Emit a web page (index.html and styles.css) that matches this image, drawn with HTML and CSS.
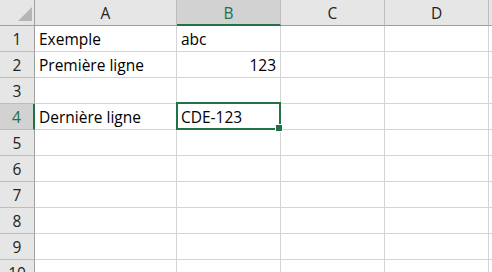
FILE: index.html
```html
<!DOCTYPE html>
<html lang="fr">
<head>
    <meta charset="UTF-8" />
    <title>Feuille</title>
    <link rel="stylesheet" href="styles.css">
</head>
<body>
    <div class="sheet">
        <div class="corner">
            <svg width="34" height="25" viewBox="0 0 34 25"><polygon points="32,7 32,21 18,21" fill="#b5b5b5"/></svg>
        </div>
        <div class="col-head">A</div>
        <div class="col-head active">B</div>
        <div class="col-head">C</div>
        <div class="col-head">D</div>
        <div class="col-head end"></div>

        <div class="row-head">1</div>
        <div class="cell">Exemple</div>
        <div class="cell">abc</div>
        <div class="cell"></div>
        <div class="cell"></div>
        <div class="cell end"></div>

        <div class="row-head">2</div>
        <div class="cell">Première ligne</div>
        <div class="cell num">123</div>
        <div class="cell"></div>
        <div class="cell"></div>
        <div class="cell end"></div>

        <div class="row-head">3</div>
        <div class="cell"></div>
        <div class="cell"></div>
        <div class="cell"></div>
        <div class="cell"></div>
        <div class="cell end"></div>

        <div class="row-head active">4</div>
        <div class="cell">Dernière ligne</div>
        <div class="cell selected">CDE-123<span class="sel-box"><span class="handle"></span></span></div>
        <div class="cell"></div>
        <div class="cell"></div>
        <div class="cell end"></div>

        <div class="row-head">5</div>
        <div class="cell"></div><div class="cell"></div><div class="cell"></div><div class="cell"></div><div class="cell end"></div>
        <div class="row-head">6</div>
        <div class="cell"></div><div class="cell"></div><div class="cell"></div><div class="cell"></div><div class="cell end"></div>
        <div class="row-head">7</div>
        <div class="cell"></div><div class="cell"></div><div class="cell"></div><div class="cell"></div><div class="cell end"></div>
        <div class="row-head">8</div>
        <div class="cell"></div><div class="cell"></div><div class="cell"></div><div class="cell"></div><div class="cell end"></div>
        <div class="row-head">9</div>
        <div class="cell"></div><div class="cell"></div><div class="cell"></div><div class="cell"></div><div class="cell end"></div>
        <div class="row-head">10</div>
        <div class="cell"></div><div class="cell"></div><div class="cell"></div><div class="cell"></div><div class="cell end"></div>
    </div>
</body>
</html>
```

FILE: styles.css
```css
body {
    margin: 0;
    background: #fff;
    overflow: hidden;
}

.sheet {
    display: grid;
    grid-template-columns: 35px 142px 104px 104px 104px 3px;
    grid-template-rows: 26px;
    grid-auto-rows: 26px;
    font-family: "Open Sans", "Noto Sans", sans-serif;
    font-size: 15.5px;
    color: #000;
}

.corner {
    background: #e6e6e6;
    border-right: 1px solid #9e9e9e;
    border-bottom: 1px solid #9e9e9e;
    box-sizing: border-box;
}
.corner svg { display: block; }

.col-head {
    background: #e6e6e6;
    border-right: 1px solid #bdbdbd;
    border-bottom: 1px solid #9e9e9e;
    box-sizing: border-box;
    display: flex;
    align-items: center;
    justify-content: center;
    padding-top: 1px;
    color: #222;
}
.col-head.end { border-right: none; }
.col-head.active {
    background: #d2d2d2;
    color: #217346;
    border-bottom: 2px solid #217346;
}

.row-head {
    background: #e6e6e6;
    border-right: 1px solid #9e9e9e;
    border-bottom: 1px solid #bdbdbd;
    box-sizing: border-box;
    display: flex;
    align-items: center;
    justify-content: center;
    color: #222;
}
.row-head.active {
    background: #d2d2d2;
    color: #217346;
    border-right: 2px solid #217346;
}

.cell {
    border-right: 1px solid #d4d4d4;
    border-bottom: 1px solid #d4d4d4;
    box-sizing: border-box;
    display: flex;
    align-items: center;
    padding: 0 4px;
    white-space: nowrap;
}
.cell.end { border-right: none; padding: 0; }
.cell.num { justify-content: flex-end; }
.cell.selected { position: relative; }

.sel-box {
    position: absolute;
    left: -1px;
    top: -2px;
    width: 105px;
    height: 28px;
    border: 2px solid #217346;
    box-sizing: border-box;
}
.handle {
    position: absolute;
    right: -4px;
    bottom: -4px;
    width: 6px;
    height: 6px;
    background: #217346;
    border: 1px solid #fff;
}
```
